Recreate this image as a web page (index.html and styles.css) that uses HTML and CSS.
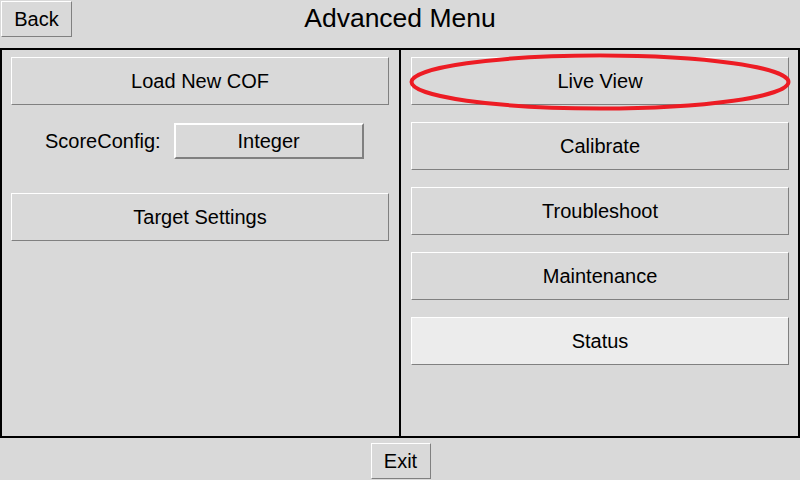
FILE: index.html
```html
<!DOCTYPE html>
<html lang="en">
<head>
    <meta charset="UTF-8">
    <title>Advanced Menu</title>
    <link rel="stylesheet" href="styles.css">
</head>
<body>
    <!-- Top bar -->
    <div class="header">
        <div class="header-left">
            <button class="btn small">Back</button>
        </div>
        <div class="title">Advanced Menu</div>
        <div></div>
    </div>

    <!-- Main frame -->
    <div class="frame">
        <div class="column left">
            <button class="btn wide">Load New COF</button>
            <div class="score-row">
                <span class="label">ScoreConfig:</span>
                <button class="btn option">Integer</button>
            </div>
            <button class="btn wide target">Target Settings</button>
        </div>
        <div class="column right">
            <div class="marked">
                <button class="btn wide">Live View</button>
                <svg class="ring" viewBox="0 0 382 58" width="382" height="58">
                    <ellipse cx="191" cy="29" rx="188.5" ry="26.5" fill="none" stroke="#ed1c24" stroke-width="4"/>
                </svg>
            </div>
            <button class="btn wide">Calibrate</button>
            <button class="btn wide">Troubleshoot</button>
            <button class="btn wide">Maintenance</button>
            <button class="btn wide active">Status</button>
        </div>
    </div>

    <!-- Bottom bar -->
    <div class="footer">
        <button class="btn small exit">Exit</button>
    </div>
</body>
</html>
```

FILE: styles.css
```css
/* Basic layout */
body {
    margin: 0;
    width: 800px;
    height: 480px;
    background-color: #d9d9d9;
    font-family: "Liberation Sans", Arial, sans-serif;
    color: #000;
    overflow: hidden;
}
/* Buttons */
.btn {
    font-family: "Liberation Sans", Arial, sans-serif;
    font-size: 20px;
    color: #000;
    background-color: #d9d9d9;
    border: 1px solid;
    border-color: #ffffff #808080 #808080 #ffffff;
    padding: 0;
    margin: 0;
    box-sizing: border-box;
    cursor: pointer;
}
.btn.small {
    height: 36px;
    width: 71px;
}
.btn.wide {
    display: block;
    width: 378px;
    height: 48px;
}
.btn.option {
    width: 190px;
    height: 36px;
    border-width: 2px;
}
.btn.active {
    background-color: #ececec;
}
/* Header */
.header {
    height: 48px;
    display: grid;
    grid-template-columns: 1fr auto 1fr;
}
.header-left {
    padding: 1px 0 0 1px;
}
.title {
    font-size: 26.5px;
    line-height: 36px;
}
/* Main frame */
.frame {
    height: 390px;
    box-sizing: border-box;
    border: 2px solid #000;
    display: flex;
}
.column {
    width: 397px;
    padding-top: 7px;
    box-sizing: border-box;
    display: flex;
    flex-direction: column;
}
.column.left {
    padding-left: 9px;
    border-right: 2px solid #000;
    width: 399px;
}
.column.right {
    padding-left: 10px;
    gap: 17px;
}
.score-row {
    display: flex;
    align-items: center;
    gap: 13px;
    margin-top: 18px;
    padding-left: 34px;
}
.label {
    font-size: 20px;
}
.target {
    margin-top: 34px;
}
/* Marker round Live View */
.marked {
    position: relative;
}
.ring {
    position: absolute;
    left: -2px;
    top: -4px;
    pointer-events: none;
}
/* Footer */
.footer {
    display: flex;
    justify-content: center;
    padding-top: 5px;
}
.btn.exit {
    width: 60px;
    margin-left: 1px;
}
```
